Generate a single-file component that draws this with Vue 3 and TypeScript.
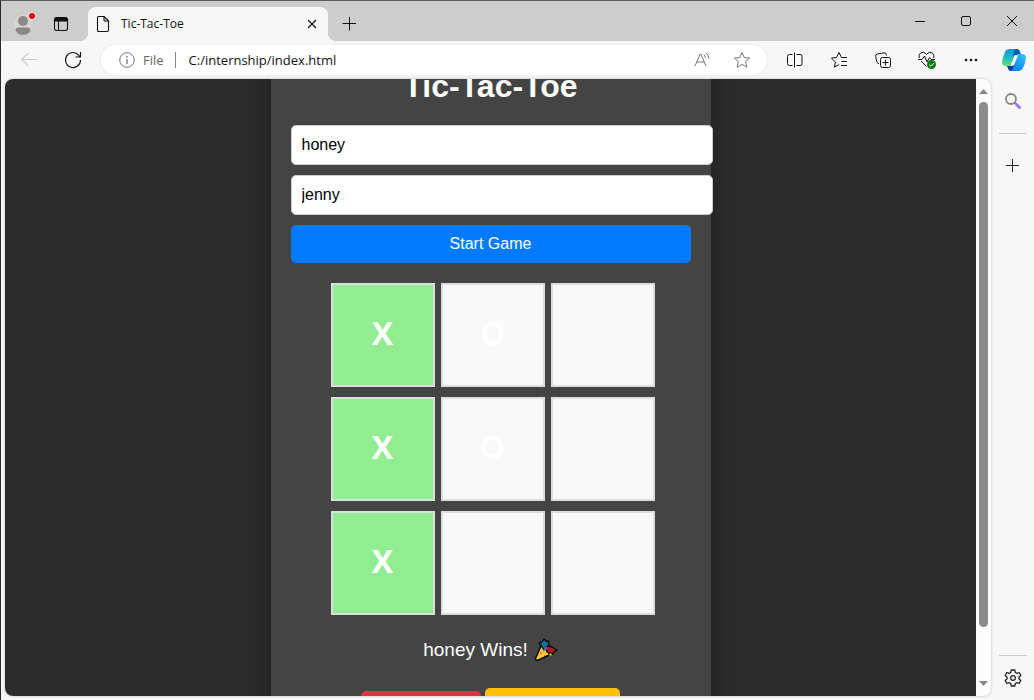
<script setup lang="ts">
import { ref } from 'vue'

const address = ref('C:/internship/index.html')
const playerX = ref('honey')
const playerO = ref('jenny')

type Mark = 'X' | 'O' | ''
interface Cell {
  mark: Mark
  win: boolean
}

const marks: Mark[] = ['X', 'O', '', 'X', 'O', '', 'X', '', '']
const winning = [0, 3, 6]
const cells: Cell[] = marks.map((mark, i) => ({ mark, win: winning.includes(i) }))
</script>

<template>
  <div class="window">
    <header class="tabbar">
      <button class="profile" aria-label="Profile">
        <svg width="26" height="26" viewBox="0 0 26 26">
          <circle cx="12" cy="13" r="10.5" fill="#d6d4d0" stroke="#c3c1bd" stroke-width=".6" />
          <circle cx="12" cy="10" r="5" fill="#8b8885" />
          <path d="M4.500 19.500Q4.500 16.500 7.500 16.500h9q3 0 3 3Q17 24 12 24T4.500 19.500Z" fill="#8b8885" />
          <circle cx="21" cy="5" r="3.700" fill="#e7e5e5" />
          <circle cx="21" cy="5" r="3" fill="#e30613" />
        </svg>
      </button>
      <button class="tabs-menu" aria-label="Tab actions">
        <svg width="16" height="16" viewBox="0 0 16 16" fill="none" stroke="#111" stroke-width="1.100">
          <rect x="1.500" y="1.500" width="13" height="13" rx="2.200" />
          <path d="M2 2.500h12v2.500H2z" fill="#111" />
          <path d="M5.500 5v9.500" />
        </svg>
      </button>
      <div class="tab">
        <svg width="14" height="18" viewBox="0 0 14 18" fill="none" stroke="#111" stroke-width="1.100" stroke-linejoin="round">
          <path d="M2.500 1.500h5.500l4.500 4.500v9q0 1.500-1.500 1.500H2.500Q1.500 16.500 1.500 15.500v-13q0-1 1-1Z" />
          <path d="M8 1.500v3.500q0 1 1 1h3.500" />
        </svg>
        <span class="tab-title">Tic-Tac-Toe</span>
        <button class="close-tab" aria-label="Close tab">
          <svg width="10" height="10" viewBox="0 0 10 10" stroke="#111" stroke-width="1.100"><path d="M1 1l8 8M9 1l-8 8" /></svg>
        </button>
      </div>
      <button class="new-tab" aria-label="New tab">
        <svg width="14" height="14" viewBox="0 0 14 14" stroke="#111"><path d="M.5 6.500h14M7.500 0v13.500" /></svg>
      </button>
      <div class="controls">
        <button aria-label="Minimize">
          <svg width="12" height="12" viewBox="0 0 12 12" stroke="#111"><path d="M1 6.500h10" /></svg>
        </button>
        <button aria-label="Maximize">
          <svg width="12" height="12" viewBox="0 0 12 12" stroke="#111" fill="none"><rect x="1.500" y="1.500" width="9" height="9" rx="1.500" /></svg>
        </button>
        <button aria-label="Close">
          <svg width="12" height="12" viewBox="0 0 12 12" stroke="#111"><path d="M1 1l10 10M11 1L1 11" /></svg>
        </button>
      </div>
    </header>

    <nav class="toolbar">
      <button class="tool" aria-label="Back">
        <svg width="18" height="16" viewBox="0 0 18 16" fill="none" stroke="#c9c9c9" stroke-width="1.100"><path d="M17 7.500H1.500M8.500 .8L1.500 7.500l7 6.700" /></svg>
      </button>
      <button class="tool" aria-label="Refresh">
        <svg width="18" height="18" viewBox="0 0 18 18" fill="none" stroke="#111" stroke-width="1.100"><path d="M16.500 9A7.500 7.500 0 1 1 14.800 4.300L16 5.800M16.500 1v5h-5" /></svg>
      </button>
      <div class="address">
        <svg width="16" height="16" viewBox="0 0 16 16" fill="none" stroke="#767676">
          <circle cx="8" cy="8" r="7.300" /><path d="M8 7v5" stroke-width="1.300" /><circle cx="8" cy="4.800" r=".9" fill="#767676" stroke="none" />
        </svg>
        <span class="scheme">File</span>
        <span class="divider"></span>
        <input v-model="address" class="url" aria-label="Address" spellcheck="false" />
        <button class="inner-tool" aria-label="Read aloud">
          <svg width="16" height="16" viewBox="0 0 16 16" fill="none" stroke="#767676">
            <path d="M1 14L6.200 2h.6L12 14M3 10h7" /><path d="M9.800 2.500q1.500 1.200 1.700 3.300M11.800.8q3 1.800 3 5.800" />
          </svg>
        </button>
        <button class="inner-tool" aria-label="Add to favorites">
          <svg width="18" height="18" viewBox="0 0 18 18" fill="none" stroke="#767676" stroke-linejoin="round"><path d="M9 1.500l2.200 5 5.400.5-4 3.700 1.200 5.500L9 13.400l-4.800 2.800 1.200-5.500-4-3.700 5.400-.5Z" /></svg>
        </button>
      </div>
      <button class="tool" aria-label="Split screen">
        <svg width="18" height="16" viewBox="0 0 18 16" fill="none" stroke="#111"><path d="M6.500 2.500H3.500q-2 0-2 2v7q0 2 2 2h3M10.500 2.500h3.500q2 0 2 2v7q0 2-2 2h-3.500M8.500 .5v15" /></svg>
      </button>
      <button class="tool" aria-label="Favorites">
        <svg width="18" height="18" viewBox="0 0 18 18" fill="none" stroke="#111" stroke-linejoin="round"><path d="M17 6.500h-5.500L9 1.500 6.500 6.500l-5 .6 3.800 4-.9 5L9 13.600M11.500 10.500H17M11 14.500h6" /></svg>
      </button>
      <button class="tool" aria-label="Collections">
        <svg width="18" height="18" viewBox="0 0 18 18" fill="none" stroke="#111">
          <rect x="6.500" y="6.500" width="10" height="10" rx="2" /><path d="M11.500 8.500v6M8.500 11.500h6M12.500 4.500q-.2-3-2.500-2.700L3.300 3Q1.200 3.500 1.700 5.500l1 5q.4 1.800 2.200 2.200" />
        </svg>
      </button>
      <button class="tool" aria-label="Browser essentials">
        <svg width="20" height="20" viewBox="0 0 20 20" fill="none" stroke="#111" stroke-linejoin="round">
          <path d="M2.200 8Q1.500 5 3.300 3.300 6.500.8 9.500 4.500q3-3.700 6.200-1.200Q17.500 5 16.800 8M4 11l5.500 5.500" /><path d="M1 9.500h4L7.500 6l2.500 6 2.500-4.500L14 9.500h4" />
          <circle cx="14.500" cy="14.500" r="4.500" fill="#107c10" stroke="none" /><path d="M12.300 14.700l1.600 1.500 3-3" stroke="#fff" />
        </svg>
      </button>
      <button class="tool" aria-label="More">
        <svg width="16" height="4" viewBox="0 0 16 4" fill="#111"><circle cx="3" cy="2" r="1.300" /><circle cx="8" cy="2" r="1.300" /><circle cx="13" cy="2" r="1.300" /></svg>
      </button>
      <button class="tool" aria-label="Copilot">
        <svg width="24" height="24" viewBox="0 0 24 24">
          <defs>
            <linearGradient id="cp-a" x1="0" y1="0" x2="0" y2="1"><stop stop-color="#0895d8" /><stop offset=".5" stop-color="#1dbcc5" /><stop offset="1" stop-color="#67dd6c" /></linearGradient>
            <linearGradient id="cp-b" x1="1" y1="0" x2="0" y2="1"><stop stop-color="#39c7fa" /><stop offset=".5" stop-color="#189bf7" /><stop offset="1" stop-color="#1268f0" /></linearGradient>
          </defs>
          <path d="M7 1h8q2 0 3 3l1 3h-6L9 18H4q-4 0-4-4Q1 8 3 4q1.300-3 4-3Z" fill="url(#cp-a)" />
          <path d="M13 1h2q2 0 3 3l1 3h-5q-2 0-3 2 .5-6 2-8Z" fill="#075fa5" />
          <path d="M15 6h5q4 0 4 4-1 6-3 10-1.300 3-4 3H9q-2 0-3-3l-1-2h4q2 0 3-3Z" fill="url(#cp-b)" />
          <path d="M5 18h4q2 0 3-3l-1 5q-1 3-3 3-1.500-.5-2-3Z" fill="#083b9b" />
          <path d="M12.500 7.500H16L12 17q-1 1-3.500 1Z" fill="#f9ffff" />
        </svg>
      </button>
    </nav>

    <div class="body">
      <div class="frame">
        <main class="page">
          <section class="card">
            <h1>Tic-Tac-Toe</h1>
            <input v-model="playerX" class="player" type="text" aria-label="Player X" />
            <input v-model="playerO" class="player" type="text" aria-label="Player O" />
            <button class="start">Start Game</button>
            <div class="board">
              <button v-for="(cell, i) in cells" :key="i" class="cell" :class="{ win: cell.win }" :aria-label="`Cell ${i + 1} ${cell.mark}`">{{ cell.mark }}</button>
            </div>
            <p class="result">
              <span>honey Wins!</span>
              <svg width="24" height="24" viewBox="0 0 24 24" stroke="#080808" stroke-linejoin="round">
                <path d="M7 8L1.500 20.500q0 2.500 3 1.500L16 16.500Q12 9 7 8Z" fill="#ffc83d" stroke-width="1.500" />
                <path d="M5 5l3-1 2-3 2.500 2.500 2-.5.500 4-3 2-2 3L7 7.500Z" fill="#13729b" stroke-width="1.300" />
                <path d="M12 11l2-3 4 1 3 2 2 1-3 2-1 2-4-1-2-1Z" fill="#a52017" stroke-width="1.300" />
                <path d="M10.500 12l2.500-3" stroke="#8b55ca" stroke-width="2" />
                <g stroke="none"><path d="M6 14h2v2H6zM10 17h2v1h-2z" fill="#f0783c" /><path d="M9 12h1.500v1.500H9z" fill="#3aa0ad" /><path d="M15.500 15.500h2v2h-2z" fill="#ffd52e" /></g>
              </svg>
            </p>
            <div class="actions">
              <button class="restart" aria-label="Restart"></button>
              <button class="reset" aria-label="Reset"></button>
            </div>
          </section>
        </main>
        <div class="scrollbar">
          <svg width="9" height="5" viewBox="0 0 9 5"><path d="M0 5L4.500 0 9 5Z" fill="#868686" /></svg>
          <div class="track"><div class="thumb"></div></div>
          <svg width="9" height="5" viewBox="0 0 9 5"><path d="M0 0L4.500 5 9 0Z" fill="#868686" /></svg>
        </div>
      </div>
      <aside class="sidebar">
        <button aria-label="Search">
          <svg width="18" height="18" viewBox="0 0 18 18" fill="none">
            <circle cx="7" cy="7" r="5" stroke="#858585" stroke-width="1.800" /><path d="M10.800 10.800l1.500 1.500" stroke="#858585" stroke-width="2" /><path d="M12.500 12.500l3 3" stroke="#a874db" stroke-width="3" stroke-linecap="round" />
          </svg>
        </button>
        <hr />
        <button aria-label="Customize">
          <svg width="14" height="14" viewBox="0 0 14 14" stroke="#222"><path d="M0 6.500h13M6.500 0v13" /></svg>
        </button>
        <hr class="lower" />
        <button aria-label="Settings">
          <svg width="18" height="18" viewBox="0 0 18 18" fill="none" stroke="#222" stroke-width="1.300" stroke-linejoin="round">
            <path d="M7.300 1h3.400l.6 2.500 1.300.8 2.500-.8 1.700 3-1.900 1.700v1.600l1.900 1.700-1.700 3-2.500-.8-1.300.8-.6 2.500H7.300l-.6-2.500-1.300-.8-2.500.8-1.700-3 1.900-1.700V8.200L1.200 6.500l1.700-3 2.500.8 1.300-.8Z" /><circle cx="9" cy="9" r="2.300" />
          </svg>
        </button>
      </aside>
    </div>
  </div>
</template>

<style>
body {
  margin: 0;
}
</style>

<style scoped>
.window {
  box-sizing: border-box;
  display: flex;
  flex-direction: column;
  height: 100vh;
  overflow: hidden;
  border-top: 1px solid #5d5b5d;
  border-left: 1px solid #2b282b;
  background: #f7f7f7;
  font-family: "Open Sans", "Noto Sans", sans-serif;
  color: #111;
}
button {
  display: flex;
  align-items: center;
  justify-content: center;
  border: 0;
  padding: 0;
  background: none;
  color: inherit;
  flex-shrink: 0;
}
svg {
  flex-shrink: 0;
}
.tabbar {
  display: flex;
  height: 40px;
  background: #cdcdcd;
  flex-shrink: 0;
}
.profile {
  width: 46px;
  height: 46px;
}
.tabs-menu {
  width: 28px;
  height: 46px;
}
.tab {
  position: relative;
  display: flex;
  align-items: center;
  box-sizing: border-box;
  width: 240px;
  height: 34px;
  margin: 6px 0 0 13px;
  padding: 0 6px 0 8px;
  border-radius: 8px 8px 0 0;
  background: #f7f7f7;
}
.tab::before,
.tab::after {
  content: "";
  position: absolute;
  bottom: 0;
  width: 8px;
  height: 8px;
}
.tab::before {
  right: 100%;
  background: radial-gradient(circle at 0 0, #cdcdcd 8px, #f7f7f7 8px);
}
.tab::after {
  left: 100%;
  background: radial-gradient(circle at 100% 0, #cdcdcd 8px, #f7f7f7 8px);
}
.tab-title {
  flex: 1;
  margin-left: 11px;
  font-size: 12px;
  line-height: 16px;
}
.close-tab {
  width: 20px;
  height: 20px;
}
.new-tab {
  width: 42px;
  height: 46px;
}
.controls {
  display: flex;
  margin: 0 -1px 0 auto;
}
.controls button {
  width: 46px;
  height: 40px;
}
.toolbar {
  display: flex;
  align-items: center;
  height: 38px;
  padding-left: 6px;
  flex-shrink: 0;
}
.tool {
  width: 44px;
  height: 38px;
}
.tool:last-child {
  width: 41px;
}
.address {
  display: flex;
  flex: 1;
  align-items: center;
  min-width: 0;
  height: 30px;
  margin: 0 6px 0 6px;
  padding: 0 5px 0 18px;
  border-radius: 15px;
  background: #fff;
  box-shadow: 0 0 3px #e4e4e4;
  box-sizing: border-box;
}
.scheme {
  margin-left: 8px;
  font-size: 13px;
  color: #666;
}
.divider {
  width: 1px;
  height: 16px;
  margin: 0 13px 0 11px;
  background: #888;
}
.url {
  flex: 1;
  min-width: 0;
  padding: 0;
  border: 0;
  outline: 0;
  background: none;
  font: 13px "Open Sans", "Noto Sans", sans-serif;
  color: #111;
}
.inner-tool {
  width: 40px;
  height: 30px;
}
.body {
  display: flex;
  flex: 1;
  min-height: 0;
}
.frame {
  display: flex;
  flex: 1;
  min-width: 0;
  margin: 0 0 4px 4px;
  overflow: hidden;
  border-radius: 8px;
  background: #fcfcfc;
  box-shadow: 0 0 3px #bbb;
}
.page {
  flex: 1;
  min-width: 0;
  overflow: hidden;
  background: #2c2c2c;
  font-family: "Liberation Sans", Arial, sans-serif;
}
.card {
  box-sizing: border-box;
  width: 440px;
  margin: -52px auto 0;
  padding: 20px;
  background: #444;
  box-shadow: 0 0 20px rgba(0, 0, 0, 0.3);
  color: #fff;
}
h1 {
  margin: 21px 0;
  font-size: 32px;
  line-height: 36px;
  text-align: center;
}
.player {
  display: block;
  width: 100%;
  height: 18px;
  margin-bottom: 10px;
  padding: 10px;
  border: 1px solid #ccc;
  border-radius: 5px;
  background: #fff;
  font: 16px "Liberation Sans", Arial, sans-serif;
  color: #000;
}
.start {
  width: 100%;
  height: 38px;
  border-radius: 5px;
  background: #007bff;
  font: 16px "Liberation Sans", Arial, sans-serif;
}
.board {
  display: grid;
  grid-template-columns: repeat(3, 104px);
  gap: 10px 6px;
  margin: 20px 40px;
}
.cell {
  height: 104px;
  padding-bottom: 6px;
  border: 2px solid #ddd;
  background: #f9f9f9;
  font: bold 32px "Open Sans", "Noto Sans", sans-serif;
}
.cell.win {
  background: #90ee90;
}
.result {
  display: flex;
  align-items: center;
  justify-content: center;
  gap: 6px;
  margin: 0;
  font-size: 19px;
  line-height: 30px;
}
.actions {
  display: flex;
  align-items: flex-end;
  justify-content: center;
  gap: 4px;
  margin-top: 23px;
}
.restart,
.reset {
  border-radius: 5px;
}
.restart {
  width: 120px;
  height: 38px;
  background: #dc3545;
}
.reset {
  width: 135px;
  height: 41px;
  background: #ffc107;
}
.scrollbar {
  display: flex;
  flex-direction: column;
  align-items: center;
  box-sizing: border-box;
  width: 15px;
  padding: 10px 0;
}
.track {
  flex: 1;
  width: 9px;
  margin: 8px 0;
}
.thumb {
  height: 92%;
  border-radius: 5px;
  background: #8b8b8b;
}
.sidebar {
  display: flex;
  flex-direction: column;
  align-items: center;
  width: 43px;
}
.sidebar button {
  width: 43px;
  height: 44px;
}
.sidebar hr {
  width: 28px;
  height: 1px;
  margin: 10px 0;
  border: 0;
  background: #ccc;
}
.sidebar hr.lower {
  margin: auto 0 0;
}
</style>
